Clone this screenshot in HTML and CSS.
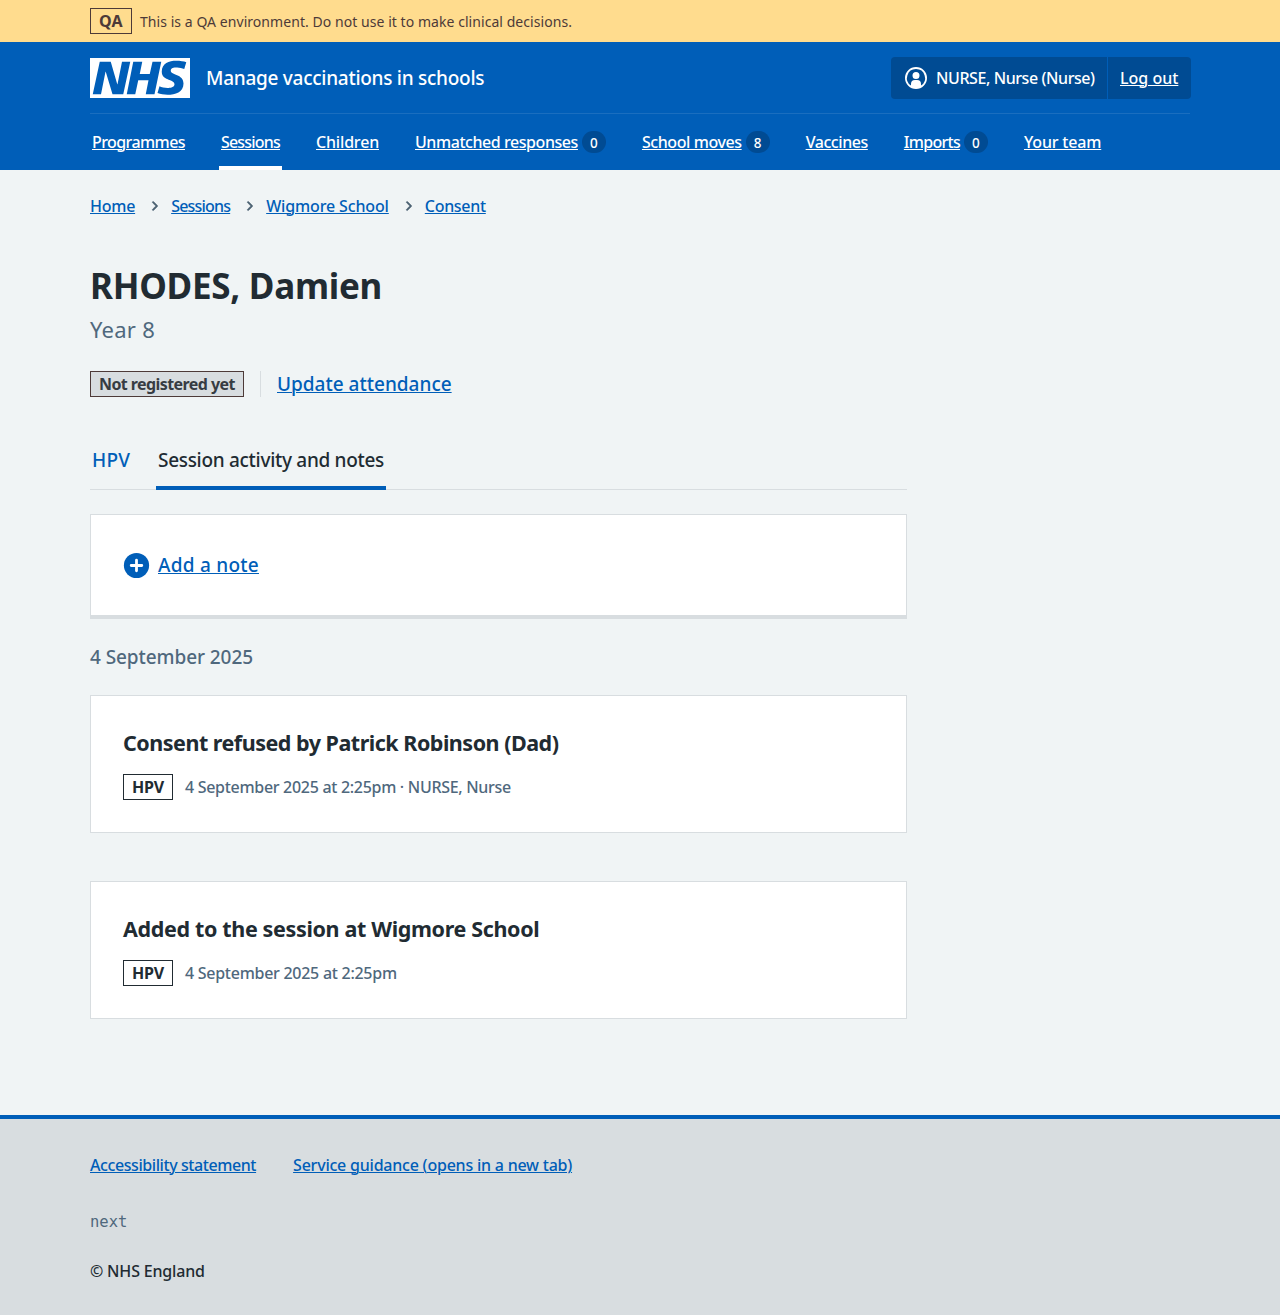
FILE: index.html
```html
<!DOCTYPE html>
<html lang="en">
<head>
<meta charset="utf-8">
<title>RHODES, Damien – Manage vaccinations in schools</title>
<link rel="stylesheet" href="styles.css">
</head>
<body>
<div class="env">
  <div class="container env-row">
    <strong class="tag tag-env">QA</strong>
    <span class="env-text">This is a QA environment. Do not use it to make clinical decisions.</span>
  </div>
</div>

<header class="header">
  <div class="container header-top">
    <a class="brand" href="#">
      <svg class="logo" viewBox="0 0 200 80" width="100" height="40" role="img" aria-label="NHS">
        <path fill="#fff" d="M0 0h200v80H0z"/>
        <path fill="#005eb8" d="M172.500 5.500c-14.500 0-29 5-29 22 0 10.200 7.700 13.500 14.700 16.300l.7.300c5.400 2 10.100 3.900 10.100 8.400 0 6.500-8.500 7.500-14 7.500s-12.500-1.500-16-3.500L135 70c5.500 2 13.500 3.500 20 3.500 15.500 0 32-4.500 32-22.500 0-19.500-25.500-16.500-25.500-25.500 0-5.500 5.500-6.500 12.500-6.500a35 35 0 0 1 14.500 3l4-13.500c-4.500-2-12-3-20-3Zm-131 2h-22l-14 65H22l9-45h.5l13.500 45h21.500l14-65H64l-9 45h-.5l-13-45Zm63 0h-18l-13 65h17l6-28H117l-5.500 28H129l13.500-65H125L119.500 32h-20l5-24.500Z"/>
      </svg>
      <span class="service">Manage vaccinations in schools</span>
    </a>
    <div class="account">
      <span class="account-user">
        <svg width="24" height="24" viewBox="0 0 24 24" fill="#fff" aria-hidden="true"><path d="M12 1a11 11 0 1 1 0 22 11 11 0 0 1 0-22Zm0 2a9 9 0 0 0-5 16.500V18a4 4 0 0 1 4-4h2a4 4 0 0 1 4 4v1.500A9 9 0 0 0 12 3Zm0 3a3.500 3.500 0 1 1 0 7 3.500 3.500 0 0 1 0-7Z"/></svg>
        <span class="tight-42">NURSE, Nurse (Nurse)</span>
      </span>
      <a class="account-out" href="#">Log out</a>
    </div>
  </div>
  <nav class="container nav">
    <a class="nav-item" href="#"><span class="link tight-58">Programmes</span></a>
    <a class="nav-item nav-current" href="#"><span class="link tight-80">Sessions</span></a>
    <a class="nav-item" href="#"><span class="link tight-18">Children</span></a>
    <a class="nav-item" href="#"><span class="link tight-44">Unmatched responses</span><span class="count">0</span></a>
    <a class="nav-item" href="#"><span class="link tight-42">School moves</span><span class="count">8</span></a>
    <a class="nav-item" href="#"><span class="link tight-44">Vaccines</span></a>
    <a class="nav-item" href="#"><span class="link tight-72">Imports</span><span class="count">0</span></a>
    <a class="nav-item" href="#"><span class="link tight-18">Your team</span></a>
  </nav>
</header>

<main class="container main">
  <nav class="crumbs">
    <a class="link tight-24" href="#">Home</a>
    <svg class="chevron" viewBox="0 0 24 24"><path d="M15.500 12a1 1 0 0 1-.29.710l-5 5a1 1 0 0 1-1.420-1.420l4.300-4.290-4.300-4.290a1 1 0 0 1 1.420-1.420l5 5a1 1 0 0 1 .29.710z"/></svg>
    <a class="link tight-80" href="#">Sessions</a>
    <svg class="chevron" viewBox="0 0 24 24"><path d="M15.500 12a1 1 0 0 1-.29.710l-5 5a1 1 0 0 1-1.420-1.420l4.300-4.290-4.300-4.290a1 1 0 0 1 1.420-1.420l5 5a1 1 0 0 1 .29.710z"/></svg>
    <a class="link tight-14" href="#">Wigmore School</a>
    <svg class="chevron" viewBox="0 0 24 24"><path d="M15.500 12a1 1 0 0 1-.29.710l-5 5a1 1 0 0 1-1.420-1.420l4.300-4.290-4.300-4.290a1 1 0 0 1 1.420-1.420l5 5a1 1 0 0 1 .29.710z"/></svg>
    <a class="link tight-30" href="#">Consent</a>
  </nav>

  <div class="content">
    <h1 class="title">RHODES, Damien</h1>
    <p class="year">Year 8</p>
    <div class="actions">
      <strong class="tag tag-grey tight-58">Not registered yet</strong>
      <span class="actions-link"><a class="link" href="#">Update attendance</a></span>
    </div>

    <div class="tabs">
      <a class="tab loose-17" href="#">HPV</a>
      <a class="tab tab-current tight-30" href="#">Session activity and notes</a>
    </div>

    <section class="card card-link">
      <svg width="27" height="27" viewBox="0 0 27 27" aria-hidden="true"><circle cx="13.500" cy="13.500" r="12.600" fill="#005eb8"/><path d="M13.500 8.200v10.600M8.200 13.500h10.600" stroke="#fff" stroke-width="2.800" stroke-linecap="round"/></svg>
      <a class="link loose-25" href="#">Add a note</a>
    </section>

    <h2 class="date">4 September 2025</h2>

    <section class="card">
      <h3 class="card-title tight-49">Consent refused by Patrick Robinson (Dad)</h3>
      <div class="meta"><strong class="tag tag-white">HPV</strong><span class="tight-30">4 September 2025 at 2:25pm · NURSE, Nurse</span></div>
    </section>

    <section class="card">
      <h3 class="card-title tight-35">Added to the session at Wigmore School</h3>
      <div class="meta"><strong class="tag tag-white">HPV</strong><span class="tight-27">4 September 2025 at 2:25pm</span></div>
    </section>
  </div>
</main>

<footer class="footer">
  <div class="container">
    <div class="footer-links">
      <a class="link tight-42" href="#">Accessibility statement</a>
      <a class="link tight-22" href="#">Service guidance (opens in a new tab)</a>
    </div>
    <p class="release">next</p>
    <p class="copyright tight-18">© NHS England</p>
  </div>
</footer>
</body>
</html>
```
FILE: styles.css
```css
* { box-sizing: border-box; }

body {
  margin: 0;
  background: #f0f4f5;
  color: #212b32;
  font: 500 16px/24px "Noto Sans", "Open Sans", sans-serif;
}

h1, h2, h3, p { margin: 0; }
a { color: #005eb8; text-decoration: none; }
svg { display: block; flex: none; }

.container { width: 1100px; margin: 0 auto; }

.link {
  text-decoration: underline;
  text-decoration-thickness: 1px;
  text-underline-offset: 1px;
}

/* Tracking, in hundredths of a pixel */
.tight-14 { letter-spacing: -.14px; }
.tight-18 { letter-spacing: -.18px; }
.tight-22 { letter-spacing: -.22px; }
.tight-24 { letter-spacing: -.24px; }
.tight-27 { letter-spacing: -.27px; }
.tight-30 { letter-spacing: -.3px; }
.tight-35 { letter-spacing: -.35px; }
.tight-42 { letter-spacing: -.42px; }
.tight-44 { letter-spacing: -.44px; }
.tight-49 { letter-spacing: -.49px; }
.tight-58 { letter-spacing: -.58px; }
.tight-72 { letter-spacing: -.72px; }
.tight-80 { letter-spacing: -.8px; }
.loose-17 { letter-spacing: .17px; }
.loose-25 { letter-spacing: .25px; }

.tag {
  display: block;
  height: 26px;
  padding: 0 8px;
  border: 1px solid;
  font-weight: 700;
  line-height: 24px;
  white-space: nowrap;
}
.tag-env { color: #4d3a38; width: 42px; letter-spacing: .2px; }
.tag-grey { width: 154px; background: #d8dde0; border-color: #4d3a38; color: #363c43; }
.tag-white { width: 50px; background: #fff; letter-spacing: -.2px; }

.env { background: #ffdc8e; color: #4d3a38; }
.env-row { display: flex; align-items: center; gap: 8px; height: 42px; }
.env-text { padding-top: 2px; font-size: 14px; font-weight: 400; letter-spacing: .055px; }

.header { height: 128px; background: #005eb8; color: #fff; }
.header a { color: #fff; }
.header-top {
  display: flex;
  justify-content: space-between;
  height: 72px;
  padding-top: 15px;
  border-bottom: 1px solid #1a6ebf;
}
.brand { display: flex; gap: 16px; padding-top: 1px; }
.service { font-size: 19px; line-height: 40px; letter-spacing: -.27px; }
.account {
  display: flex;
  height: 42px;
  margin-right: -1px;
  background: #004b93;
  border-radius: 4px;
}
.account-user {
  display: flex;
  align-items: center;
  gap: 8px;
  width: 217px;
  padding-left: 13px;
  border-right: 1px solid #005eb8;
}
.account-out {
  width: 83px;
  padding-left: 12px;
  line-height: 42px;
  text-decoration: underline;
  text-decoration-thickness: 1px;
  text-underline-offset: 1px;
}

.nav { display: flex; gap: 32px; height: 56px; }
.nav-item { display: flex; align-items: center; gap: 4px; padding: 0 2px; white-space: nowrap; }
.nav-current { box-shadow: inset 0 -4px #fff; }
.count {
  width: 24px;
  height: 22px;
  border-radius: 11px;
  background: #004b93;
  font-size: 13.500px;
  line-height: 24px;
  text-align: center;
}

.main { padding-top: 24px; height: 945px; }
.crumbs { display: flex; align-items: center; height: 24px; }
.chevron { width: 18px; height: 18px; margin: 0 7px 0 11px; fill: #4c6272; stroke: #4c6272; stroke-width: .8px; }

.content { width: 817px; }
.title { margin-top: 44px; font-size: 35px; font-weight: 700; line-height: 48px; letter-spacing: -.27px; }
.year { margin-top: 3px; color: #4f687d; font-size: 22px; font-weight: 400; line-height: 32px; letter-spacing: .25px; }
.actions { display: flex; gap: 16px; height: 26px; margin-top: 26px; }
.actions-link {
  padding-left: 16px;
  border-left: 1px solid #d8dde0;
  font-size: 19px;
  line-height: 26px;
}

.tabs {
  display: flex;
  gap: 24px;
  height: 62px;
  margin-top: 31px;
  box-shadow: inset 0 -1px #d8dde0;
  font-size: 19px;
  line-height: 64px;
}
.tab { padding: 0 2px; }
.tab-current { color: #212b32; box-shadow: inset 0 -4px #005eb8; }

.card { height: 138px; padding: 32px; background: #fff; border: 1px solid #d8dde0; }
.card + .card { margin-top: 48px; }
.card-link {
  display: flex;
  align-items: center;
  gap: 8px;
  height: 105px;
  margin-top: 24px;
  border-bottom-width: 4px;
  font-size: 19px;
}
.date { margin: 22px 0; color: #4f687d; font-size: 19px; font-weight: 500; line-height: 32px; letter-spacing: -.08px; }
.card-title { font-size: 21.500px; font-weight: 700; line-height: 30px; }
.meta { display: flex; align-items: center; gap: 12px; margin-top: 16px; color: #4f687d; }
.meta .tag { color: #212b32; }

.footer { height: 200px; padding-top: 34px; background: #d8dde0; border-top: 4px solid #005eb8; }
.footer-links { display: flex; gap: 37px; }
.release { margin-top: 33px; color: #4f687d; font: 15.500px/24px "DejaVu Sans Mono", monospace; }
.copyright { margin-top: 25px; }
```
